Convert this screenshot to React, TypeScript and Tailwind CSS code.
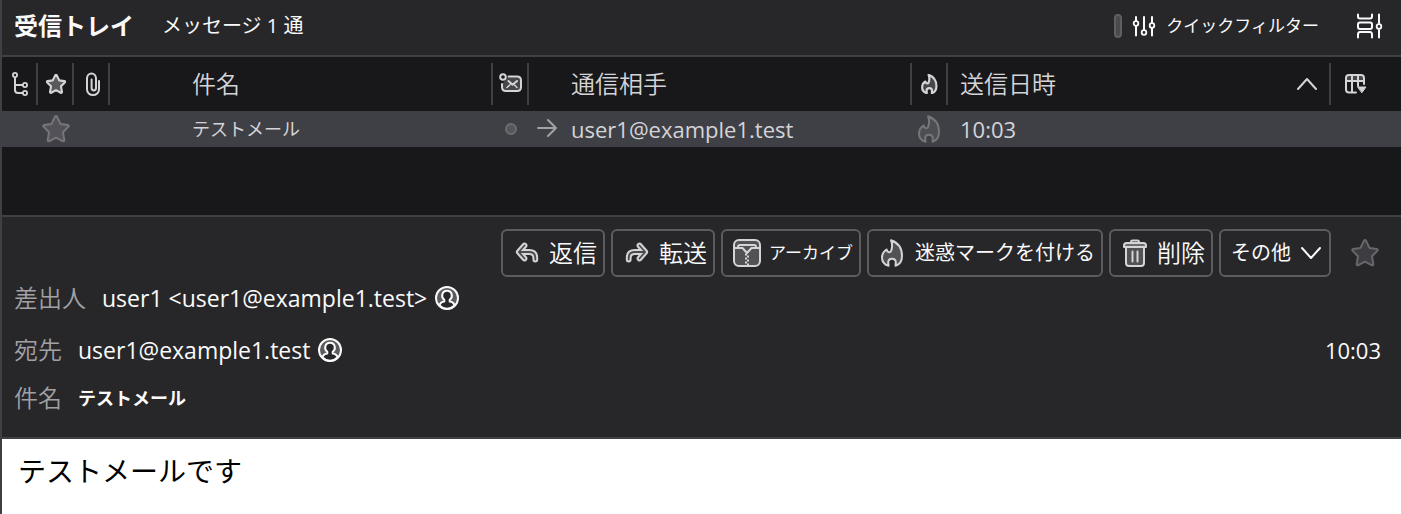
import type { ReactNode } from 'react';

type IconProps = { className?: string; weight?: number };

function Icon({
  className = 'size-6',
  box = '0 0 24 24',
  weight = 2,
  children,
}: IconProps & { box?: string; children: ReactNode }) {
  return (
    <svg
      aria-hidden="true"
      viewBox={box}
      className={`shrink-0 ${className}`}
      fill="none"
      stroke="currentColor"
      strokeWidth={weight}
      strokeLinecap="round"
      strokeLinejoin="round"
    >
      {children}
    </svg>
  );
}

const ThreadIcon = () => (
  <Icon>
    <circle cx="7" cy="3" r="2.1" strokeWidth="1.8" />
    <path d="M7 5.5v12.500q0 3 3 3h5M7 13h8" strokeLinecap="butt" />
    <circle cx="17" cy="13" r="2.1" strokeWidth="1.8" />
    <circle cx="17" cy="21" r="2.1" strokeWidth="1.8" />
  </Icon>
);

const StarIcon = ({ className, weight }: IconProps) => (
  <Icon className={className} weight={weight} box="0 0 28 28">
    <path
      d="M12.9 1.900Q14 .2 15.100 1.900l3.400 7 7.300 1.100q1.700.4.5 1.900l-5.300 5.400 1.300 7.700q.1 1.800-1.600 1.200L14 22.600l-6.700 3.600q-1.700.6-1.600-1.200L7 17.300 1.700 11.900q-1.200-1.500.5-1.900l7.300-1.100z"
      fill="currentColor"
      fillOpacity="0.35"
    />
  </Icon>
);

const ClipIcon = () => (
  <Icon>
    <path d="M19 9v8.500a6 5.500 0 0 1-12 0V6.500a4.500 5 0 0 1 9 0v9.500a2.200 2.400 0 0 1-4.400 0V7.500" />
  </Icon>
);

const UnreadIcon = () => (
  <Icon>
    <path d="M9.500 4.500H18q4 0 4 4v6.500q0 4-4 4H7q-4 0-4-4v-3" fill="currentColor" fillOpacity="0.25" />
    <path d="M9.500 9l4 3.700L18 9" />
    <path d="M8 15.500l3-2.700M18 15.500l-2.500-2.500" strokeWidth="1.500" />
    <circle cx="4" cy="5" r="2.800" fill="#18181a" />
  </Icon>
);

const FlameIcon = ({ className, weight }: IconProps) => (
  <Icon className={className} weight={weight} box="0 0 28 28">
    <path
      d="M12 1.200C13.500 5 13.500 8.500 12 12.200c-1.200 1.800-3.800 1-4.400-1.700C4.500 12.500 3 15.500 3 18.500c0 3.500 2 7 6.500 8.300.3-.6-.3-2-.3-3.300 0-5 7.600-5 7.600 0 0 1.500-.4 2.500-.2 3.300 4-1.300 6.400-5 6.400-9.800C23 9.500 19 3.500 12 1.200z"
      fill="currentColor"
      fillOpacity="0.25"
    />
  </Icon>
);

const ColumnsIcon = () => (
  <Icon>
    <path d="M3 6q0-3 3-3h12q3 0 3 3v3H3z" fill="currentColor" fillOpacity="0.25" stroke="none" />
    <path d="M13 20.500H6q-3 0-3-3V6q0-3 3-3h12q3 0 3 3v6M3 9h18M9 3v17.500M15 3v11" />
    <path d="M15 15h8l-4 5.500z" fill="currentColor" strokeWidth="1" />
  </Icon>
);

const FilterIcon = () => (
  <Icon>
    <path d="M4 3v3.500M4 12v9.500M12 3v12.500M20 3v5.500M20 14.500v7" />
    <circle cx="4" cy="9.500" r="2.300" strokeWidth="1.800" />
    <circle cx="12" cy="18.500" r="2.300" strokeWidth="1.800" />
    <circle cx="20" cy="11.500" r="2.300" strokeWidth="1.800" />
  </Icon>
);

const DisplayIcon = () => (
  <Icon className="size-7" box="0 0 28 28">
    <path d="M3 2.500v2q0 2 2 2h10q2 0 2-2v-2M3 25.500v-3q0-2.500 2-2.500h10q2 0 2 2.500v3M5 10.500h10q2 0 2 2v2.500q0 2-2 2H5q-2 0-2-2v-2.500q0-2 2-2zM24 2.500v8.500M24 18v7.500" />
    <circle cx="24" cy="14.500" r="2.300" strokeWidth="1.800" />
  </Icon>
);

const ArrowBody = () => (
  <>
    <path d="M22.300 20.500v-1.500q0-6-6-6H6M11.500 6.500L5.800 13l5.700 6.500" strokeWidth="5.800" />
    <path d="M22.300 20.500v-1.500q0-6-6-6H6M11.500 6.500L5.800 13l5.700 6.500" stroke="#4b4b4f" strokeWidth="1.800" />
  </>
);

const ReplyIcon = () => (
  <Icon className="size-7" box="0 0 28 28">
    <ArrowBody />
  </Icon>
);

const ForwardIcon = () => (
  <Icon className="size-7 -scale-x-100" box="0 0 28 28">
    <ArrowBody />
  </Icon>
);

const ArchiveIcon = () => (
  <Icon className="size-7" box="0 0 28 28">
    <rect x="1" y="1" width="26" height="26" rx="5" fill="currentColor" fillOpacity="0.25" />
    <path d="M5 9V8q0-2 2-2h14q2 0 2 2v1M1 9h8.500L14 14l4.500-5H27" />
    <path d="M13 14.500v12" strokeDasharray="2 2" strokeLinecap="butt" />
    <path d="M15 16.500v10" strokeDasharray="2 2" strokeLinecap="butt" />
  </Icon>
);

const TrashIcon = () => (
  <Icon className="size-7" box="0 0 28 28">
    <path d="M5 8h18v16q0 3-3 3H8q-3 0-3-3z" fill="currentColor" fillOpacity="0.25" />
    <path d="M3 8V6.500Q3 4 5.500 4h17Q25 4 25 6.500V8z" fill="currentColor" fillOpacity="0.4" />
    <path d="M10 3q0-1.500 1.500-1.500h5q1.500 0 1.500 1.500M11.500 12.500v10M16.500 12.500v10" />
  </Icon>
);

const PersonIcon = () => (
  <Icon>
    <circle cx="12" cy="12" r="11" fill="currentColor" fillOpacity="0.25" />
    <path
      d="M4.500 19.500c.5-2.700 2-3.700 4.800-4v-1.700C5.500 11 7 4.800 12 4.800s6.500 6.200 2.700 9v1.700c2.800.3 4.300 1.300 4.800 4-4 4.200-11 4.200-15 0z"
      fill="#27272a"
    />
  </Icon>
);

const ChevronIcon = ({ up }: { up?: boolean }) => (
  <Icon className="h-5 w-5" box="0 0 20 20">
    <path d={up ? 'M1 15l9-10 9 10' : 'M1 5l9 10 9-10'} />
  </Icon>
);

function ColumnHead({
  label,
  className = 'justify-center pl-0.5',
  children,
}: {
  label?: string;
  className?: string;
  children: ReactNode;
}) {
  return (
    <th scope="col" aria-label={label} className="py-1.5 font-[350]">
      <div className={`flex h-[42px] items-center border-r-2 border-[#3f4046] ${className}`}>{children}</div>
    </th>
  );
}

function ActionButton({
  icon,
  size = 'gap-2 pr-1.5 text-xl',
  children,
}: {
  icon?: ReactNode;
  size?: string;
  children: ReactNode;
}) {
  return (
    <button
      type="button"
      className={`flex h-12 items-center rounded-md border-2 border-[#5b5b60] pl-2.5 whitespace-nowrap ${size}`}
    >
      {icon && <span className="text-[#d4d4d8]">{icon}</span>}
      {children}
    </button>
  );
}

export default function App() {
  return (
    <main
      lang="ja"
      className="flex min-h-screen flex-col border-l-2 border-[#3f4046] bg-[#27272a] font-['Open_Sans','Noto_Sans_CJK_JP',sans-serif] text-[#fafafa]"
    >
      <header className="flex h-[57px] items-center border-b-2 border-[#3f4046] pr-[18px] pb-1 pl-3">
        <h1 className="text-2xl font-bold">受信トレイ</h1>
        <p className="ml-7 text-xl">メッセージ 1 通</p>
        <button type="button" className="ml-auto flex items-center text-[17px]">
          <span className="mr-2.5 h-6 w-2 rounded-full border-2 border-[#5f5f63] bg-[#4a4a4e]" />
          <FilterIcon />
          <span className="ml-2.5">クイックフィルター</span>
        </button>
        <button type="button" aria-label="表示オプション" className="ml-9">
          <DisplayIcon />
        </button>
      </header>

      <section className="h-40 border-b-2 border-[#3f4046] bg-[#18181a] text-[#d4d4d8]">
        <table className="w-full table-fixed border-collapse text-left">
          <colgroup>
            <col className="w-9" />
            <col className="w-9" />
            <col className="w-9" />
            <col />
            <col className="w-9" />
            <col />
            <col className="w-9" />
            <col />
            <col className="w-[70px]" />
          </colgroup>
          <thead>
            <tr className="text-2xl">
              <ColumnHead label="スレッド">
                <ThreadIcon />
              </ColumnHead>
              <ColumnHead label="スター">
                <StarIcon className="size-5" weight={3} />
              </ColumnHead>
              <ColumnHead label="添付">
                <ClipIcon />
              </ColumnHead>
              <ColumnHead className="pl-[82px]">件名</ColumnHead>
              <ColumnHead label="未読">
                <UnreadIcon />
              </ColumnHead>
              <ColumnHead className="pl-[42px]">通信相手</ColumnHead>
              <ColumnHead label="迷惑メール">
                <FlameIcon className="size-5" weight={3} />
              </ColumnHead>
              <ColumnHead className="justify-between pr-3 pl-3">
                送信日時
                <ChevronIcon up />
              </ColumnHead>
              <th className="py-1.5">
                <button type="button" aria-label="列の選択" className="ml-3 block">
                  <ColumnsIcon />
                </button>
              </th>
            </tr>
          </thead>
          <tbody>
            <tr className="h-9 bg-[#3f4046]">
              <td />
              <td>
                <button type="button" aria-label="スターを付ける" className="mx-auto block text-[#76767a]">
                  <StarIcon className="size-7" />
                </button>
              </td>
              <td />
              <td className="pl-[82px] text-lg">テストメール</td>
              <td>
                <span className="mx-auto block size-3 rounded-full border-2 border-[#6b6b70] bg-[#56565b]" />
              </td>
              <td>
                <div className="flex items-center text-[22px] leading-9">
                  <Icon className="mr-[13px] ml-[7px] size-[22px] text-[#a1a1a6]" box="0 0 22 22">
                    <path d="M2 10h18M12 2l8 8-8 8" />
                  </Icon>
                  user1@example1.test
                </div>
              </td>
              <td>
                <button type="button" aria-label="迷惑マーク" className="mx-auto block text-[#76767a]">
                  <FlameIcon className="size-7" />
                </button>
              </td>
              <td className="pl-3 text-[22px] leading-9">10:03</td>
              <td />
            </tr>
          </tbody>
        </table>
      </section>

      <section className="border-b-2 border-[#3f4046] pt-3 pr-5 pb-[18px] pl-3">
        <div className="flex items-center justify-end gap-1.5 pr-0.5">
          <ActionButton icon={<ReplyIcon />} size="gap-2 pr-1.5 text-2xl font-[350]">返信</ActionButton>
          <ActionButton icon={<ForwardIcon />} size="gap-2 pr-1.5 text-2xl font-[350]">転送</ActionButton>
          <ActionButton icon={<ArchiveIcon />} size="gap-2 pr-1.5 text-[17px]">アーカイブ</ActionButton>
          <ActionButton icon={<FlameIcon className="size-7" />}>迷惑マークを付ける</ActionButton>
          <ActionButton icon={<TrashIcon />} size="gap-2 pr-1.5 text-2xl font-[350]">削除</ActionButton>
          <ActionButton size="gap-2.5 pr-2 text-xl">
            その他
            <ChevronIcon />
          </ActionButton>
          <button type="button" aria-label="スターを付ける" className="ml-3.5 text-[#68686c]">
            <StarIcon className="size-7" />
          </button>
        </div>
        <div className="flex h-[42px] items-center gap-4 text-[23px]">
          <span className="text-2xl font-[350] text-[#a1a1a6]">差出人</span>
          <span className="flex items-center gap-2">
            user1 &lt;user1@example1.test&gt;
            <PersonIcon />
          </span>
        </div>
        <div className="mt-2.5 flex h-[42px] items-center gap-4 text-[23px]">
          <span className="text-2xl font-[350] text-[#a1a1a6]">宛先</span>
          <span className="flex items-center gap-2">
            user1@example1.test
            <PersonIcon />
          </span>
          <time className="ml-auto text-[22px]">10:03</time>
        </div>
        <div className="mt-1.5 flex h-[42px] items-center gap-4">
          <span className="text-2xl font-[350] text-[#a1a1a6]">件名</span>
          <h2 className="text-lg font-bold">テストメール</h2>
        </div>
      </section>

      <article className="flex-1 bg-white px-4 py-3 text-[28px] leading-10 text-black">
        <p>テストメールです</p>
      </article>
    </main>
  );
}
